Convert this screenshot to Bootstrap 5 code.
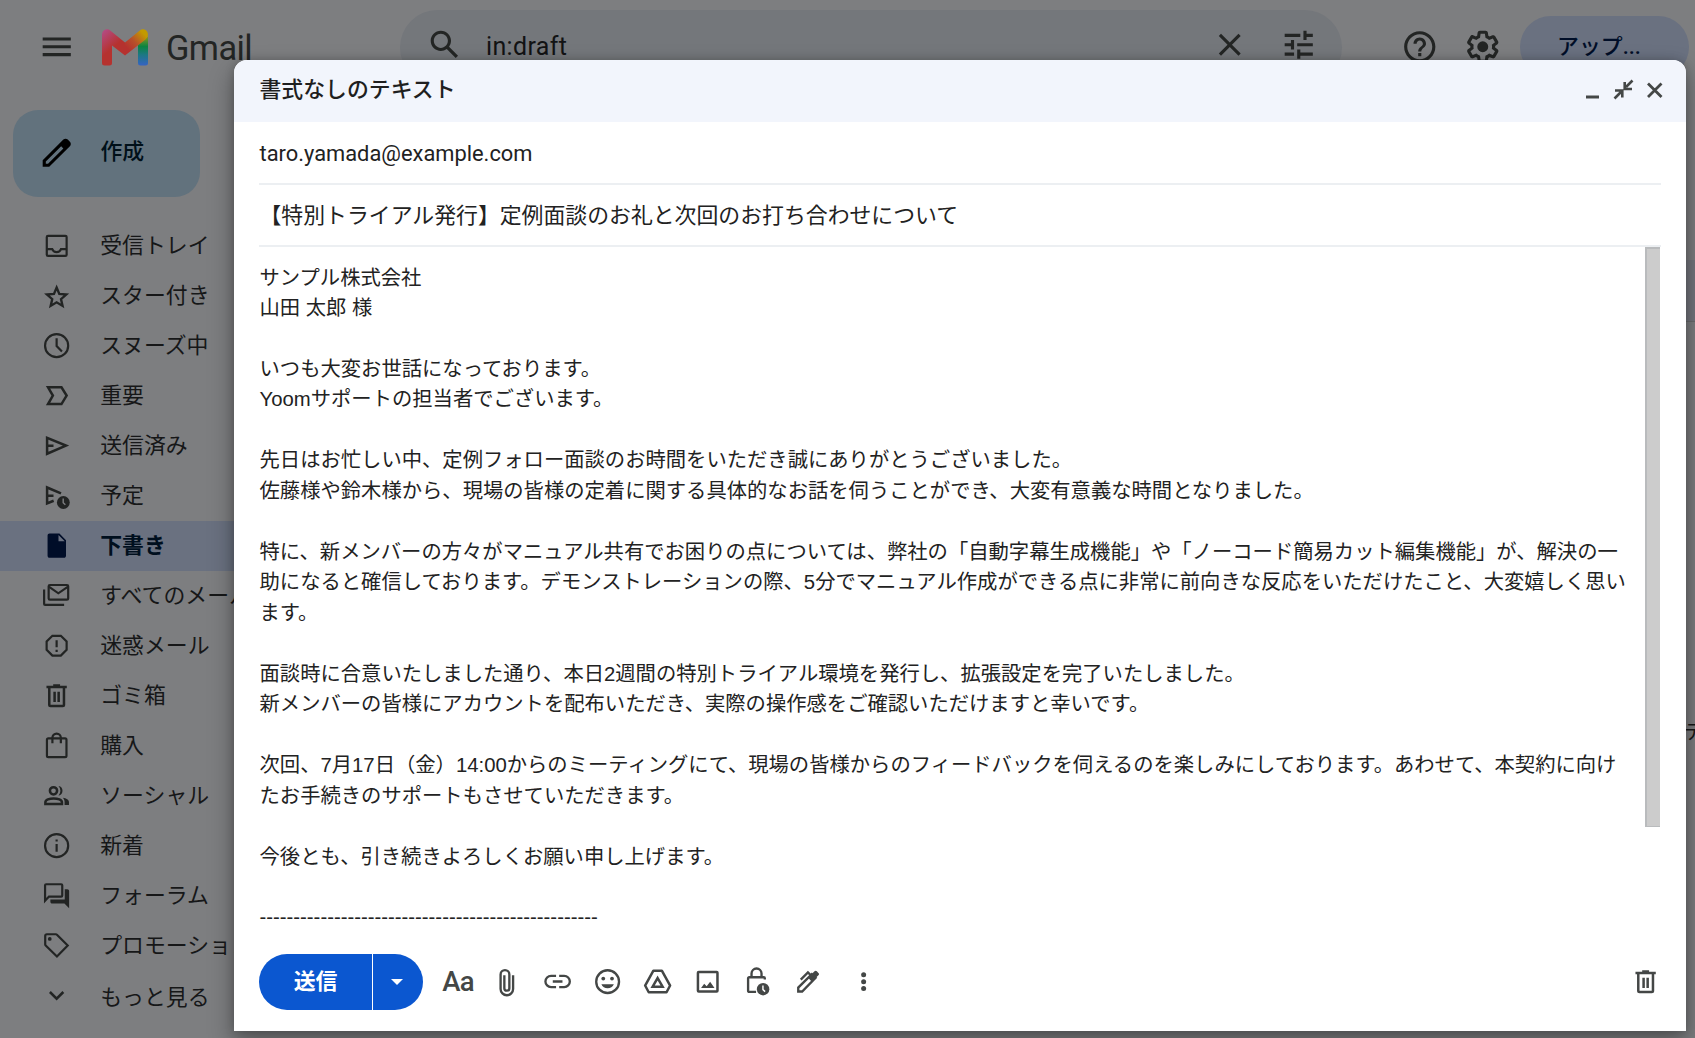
<!DOCTYPE html>
<html lang="ja">
  <head>
    <meta charset="UTF-8" />
    <meta name="viewport" content="width=device-width, initial-scale=1.0" />
    <title>Gmail</title>
    <link
      href="https://cdn.jsdelivr.net/npm/bootstrap@5.3.0/dist/css/bootstrap.min.css"
      rel="stylesheet"
    />
    <style>
      body {
        height: 1038px;
        background: #7d7e80;
        color: #161718;
        font-family: Roboto, "Noto Sans CJK JP", sans-serif;
        font-size: 21.875px;
        line-height: 1.5;
      }
      svg {
        display: block;
        flex: none;
        fill: currentColor;
      }
      .line-icon {
        fill: none;
        stroke: currentColor;
        stroke-width: 1.4;
      }
      .i20 {
        width: 31.25px;
        height: 31.25px;
      }
      .i24 {
        width: 37.5px;
        height: 37.5px;
      }
      .topbar {
        height: 94px;
        padding-left: 37.5px;
        color: #232524;
      }
      .logo-mark {
        width: 46px;
        height: 37px;
        margin-left: 27px;
      }
      .wordmark {
        width: 234px;
        margin-left: 18px;
        padding-top: 2px;
        font: 34.4px/1 Roboto, sans-serif;
        letter-spacing: -0.6px;
      }
      .search-pill {
        width: 942px;
        height: 75px;
        padding: 0 25px 4px 25.5px;
        border-radius: 38px;
        background: #74777b;
      }
      .search-text {
        margin-left: 23px;
        padding-top: 3px;
        font-size: 25px;
        letter-spacing: 0.35px;
        color: #121314;
      }
      .tune-icon {
        margin-left: 31px;
      }
      .help-icon {
        margin-left: 59px;
      }
      .gear-icon {
        margin-left: 25.5px;
      }
      .upgrade {
        width: 169px;
        height: 62px;
        margin-left: 18px;
        padding-right: 10px;
        border-radius: 31px;
        background: #6a7180;
        color: #000e28;
      }
      .side {
        width: 400px;
      }
      .compose-btn {
        width: 187px;
        height: 87px;
        margin: 16px 0 24px 13px;
        padding-left: 25px;
        gap: 25px;
        border-radius: 25px;
        background: #62727d;
        color: #001019;
      }
      .compose-btn svg {
        margin-top: -1px;
        color: #000;
      }
      .compose-btn span {
        margin-top: -2px;
      }
      .side-row {
        height: 50px;
        padding-left: 41px;
        gap: 28px;
        white-space: nowrap;
      }
      .side-row svg {
        color: #222423;
      }
      .side-row.current {
        background: #6a7180;
        color: #000f1e;
      }
      .side-row.current svg {
        color: #000d28;
      }
      .side-row.more-row {
        padding-top: 4px;
      }
      .peek {
        width: 12px;
        height: 944px;
        padding-top: 166px;
      }
      .peek-row {
        height: 62px;
        background: #74767d;
        border-bottom: 1px solid #6a6b6d;
      }
      .peek-text {
        margin-top: 395px;
        margin-left: 1px;
        font-size: 20.3px;
        white-space: nowrap;
      }
      .dialog-box {
        left: 234px;
        top: 60px;
        width: 1452px;
        height: 971px;
        border-radius: 13px 13px 0 0;
        background: #fff;
        color: #222;
        box-shadow: 0 12px 24px 2px rgba(0, 0, 0, 0.3), 0 0 10px rgba(0, 0, 0, 0.2);
      }
      .dialog-head {
        height: 62px;
        padding: 0 16px 1px 25.5px;
        background: #f2f5fc;
        border-radius: 13px 13px 0 0;
        color: #1f1f1f;
      }
      .dialog-head svg {
        margin-top: -2px;
        color: #444746;
      }
      .field-line {
        height: 62px;
        margin: 0 25px;
        padding: 2px 0 0 0.5px;
        border-bottom: 2px solid #eceff2;
        white-space: nowrap;
      }
      .mail-area {
        height: 708px;
        margin: 0 26px 0 25px;
      }
      .first-field {
        margin-top: 1px;
      }
      .mail-text {
        padding: 15.6px 0 0 0.5px;
        font-family: "Liberation Sans", "Noto Sans CJK JP", sans-serif;
        font-size: 20.325px;
        line-height: 30.46875px;
        white-space: pre;
      }
      .scroll-thumb {
        width: 15px;
        height: 580px;
        background: #ccc;
        box-shadow: inset 2px 2px 0 #b9bbbd, inset 0 -1px 0 #b9bbbd;
      }
      .tools {
        height: 56px;
        padding: 0 25px 0 25px;
        margin-top: -1px;
        color: #444746;
      }
      .send {
        height: 56px;
        margin-right: 10px;
        color: #fff;
      }
      .send-main,
      .send-more {
        height: 56px;
        background: #0b57d0;
      }
      .send-main {
        width: 113px;
        margin-right: 1px;
        border-radius: 28px 0 0 28px;
      }
      .send-more {
        width: 50px;
        padding-right: 3px;
        border-radius: 0 28px 28px 0;
      }
      .tool {
        width: 50px;
      }
      .tool-more {
        margin-left: 6px;
      }
      .letters {
        width: 50px;
        font: 500 27.5px/1 Roboto, sans-serif;
        letter-spacing: -0.8px;
      }
    </style>
  </head>
  <body class="overflow-hidden position-relative">
    <header class="topbar d-flex align-items-center">
      <svg class="i24" viewBox="0 0 24 24"><path d="M3 18h18v-2H3v2zm0-5h18v-2H3v2zm0-7v2h18V6H3z" /></svg>
      <svg class="logo-mark" viewBox="0 0 46 37">
        <defs>
          <linearGradient id="gl" gradientUnits="userSpaceOnUse" x1="2" y1="2" x2="14" y2="16">
            <stop offset="0" stop-color="#b44a80" />
            <stop offset="1" stop-color="#b5322f" />
          </linearGradient>
          <linearGradient id="gr" gradientUnits="userSpaceOnUse" x1="0" y1="4" x2="0" y2="36">
            <stop offset="0" stop-color="#c29a00" />
            <stop offset="0.22" stop-color="#5f902b" />
            <stop offset="0.42" stop-color="#0a8440" />
            <stop offset="0.68" stop-color="#1d7884" />
            <stop offset="1" stop-color="#3464c0" />
          </linearGradient>
          <linearGradient id="gv" gradientUnits="userSpaceOnUse" x1="26" y1="20" x2="42" y2="5">
            <stop offset="0" stop-color="#b5322f" />
            <stop offset="0.45" stop-color="#b8502a" />
            <stop offset="1" stop-color="#c29a00" />
          </linearGradient>
        </defs>
        <path fill="url(#gr)" d="M36 8H46V34Q46 36.500 43.500 36.500H38.500Q36 36.500 36 34z" />
        <path fill="url(#gv)" d="M23 13.500L37.500 1.700C41-1.300 46 1 46 6Q46 8.500 43.500 10.400L23 26.500z" />
        <path fill="url(#gl)" d="M0 6C0 1 5-1.300 8.500 1.700L23 13.500V26.500L10 16.500V34Q10 36.500 7.500 36.500H2.500Q0 36.500 0 34z" />
      </svg>
      <div class="wordmark">Gmail</div>
      <div class="search-pill d-flex align-items-center">
        <svg class="i24" viewBox="0 0 24 24"><path d="M20.490 19l-5.730-5.730C15.530 12.200 16 10.910 16 9.500 16 5.910 13.090 3 9.500 3S3 5.910 3 9.500 5.910 16 9.500 16c1.410 0 2.700-.470 3.770-1.240L19 20.490 20.490 19zM5 9.500C5 7.010 7.010 5 9.500 5S14 7.010 14 9.500 11.990 14 9.500 14 5 11.990 5 9.500z" /></svg>
        <span class="search-text flex-grow-1">in:draft</span>
        <svg class="i24" viewBox="0 0 24 24"><path d="M19 6.410L17.590 5 12 10.590 6.410 5 5 6.410 10.590 12 5 17.590 6.410 19 12 13.410 17.590 19 19 17.590 13.410 12z" /></svg>
        <svg class="i24 tune-icon" viewBox="0 0 24 24"><path d="M3 17v2h6v-2H3zM3 5v2h10V5H3zm10 16v-2h8v-2h-8v-2h-2v6h2zM7 9v2H3v2h4v2h2V9H7zm14 4v-2H11v2h10zm-6-4h2V7h4V5h-4V3h-2v6z" /></svg>
      </div>
      <svg class="i24 help-icon" viewBox="0 0 24 24"><path d="M11 18h2v-2h-2v2zm1-16C6.480 2 2 6.480 2 12s4.480 10 10 10 10-4.480 10-10S17.520 2 12 2zm0 18c-4.410 0-8-3.590-8-8s3.590-8 8-8 8 3.590 8 8-3.590 8-8 8zm0-14c-2.210 0-4 1.790-4 4h2c0-1.100.900-2 2-2s2 .900 2 2c0 2-3 1.750-3 5h2c0-2.250 3-2.500 3-5 0-2.210-1.790-4-4-4z" /></svg>
      <svg class="i24 gear-icon" viewBox="0 0 24 24"><path d="M13.850 22.250h-3.700c-.740 0-1.360-.540-1.450-1.270l-.270-1.890c-.270-.140-.530-.290-.790-.460l-1.800.720c-.700.260-1.470-.030-1.810-.650L2.200 15.530c-.350-.660-.200-1.440.360-1.880l1.530-1.190c-.010-.150-.020-.300-.020-.460 0-.150.010-.310.020-.460l-1.520-1.190c-.590-.450-.740-1.260-.370-1.880l1.850-3.190c.340-.620 1.110-.900 1.790-.630l1.810.730c.260-.170.520-.320.780-.460l.270-1.910c.090-.700.710-1.250 1.440-1.250h3.700c.740 0 1.360.540 1.450 1.270l.270 1.890c.270.140.530.290.790.460l1.800-.720c.710-.260 1.480.030 1.820.650l1.840 3.180c.360.660.200 1.440-.360 1.880l-1.520 1.190c.010.150.020.300.020.460s-.010.310-.020.460l1.520 1.190c.560.450.720 1.230.370 1.860l-1.860 3.220c-.340.620-1.110.900-1.800.630l-1.800-.720c-.260.170-.520.320-.780.460l-.270 1.910c-.100.680-.720 1.220-1.460 1.220zm-3.230-2h2.760l.370-2.550.530-.220c.440-.180.880-.440 1.340-.780l.450-.340 2.380.960 1.380-2.400-2.030-1.580.070-.560c.030-.260.060-.510.060-.780s-.030-.530-.060-.780l-.070-.560 2.030-1.580-1.390-2.400-2.390.960-.450-.350c-.420-.320-.870-.580-1.330-.770l-.520-.220-.370-2.550h-2.760l-.370 2.550-.530.210c-.440.190-.880.440-1.340.790l-.450.330-2.380-.950-1.390 2.390 2.030 1.580-.070.560a7 7 0 0 0-.060.790c0 .260.020.530.060.780l.070.560-2.030 1.580 1.380 2.400 2.390-.960.450.350c.430.330.860.580 1.330.770l.530.220z" /><circle cx="12" cy="12" r="3.500" /></svg>
      <div class="upgrade d-flex align-items-center justify-content-center fw-medium">アップ...</div>
    </header>

    <div class="d-flex justify-content-between">
      <nav class="side">
        <div class="compose-btn d-flex align-items-center">
          <svg class="i24" viewBox="0 0 24 24"><path d="M20.410 4.940l-1.350-1.350c-.780-.780-2.050-.780-2.830 0L3 16.820V21h4.180L20.410 7.770c.790-.780.790-2.050 0-2.830zm-14 14.120L5 19v-1.360l9.820-9.820 1.410 1.410-9.820 9.830z" /></svg>
          <span class="fw-medium">作成</span>
        </div>
        <div id="folders"></div>
      </nav>
      <div class="peek overflow-hidden">
        <div class="peek-row"></div>
        <div class="peek-text">デ</div>
      </div>
    </div>

    <section class="dialog-box position-absolute d-flex flex-column">
      <div class="dialog-head d-flex align-items-center">
        <span class="fw-medium flex-grow-1">書式なしのテキスト</span>
        <svg width="31" height="31" viewBox="0 0 31 31"><path d="M9 21.500h13v3H9z" /></svg>
        <svg width="31" height="31" viewBox="0 0 31 31"><path d="M24.500 6.500l-6.500 6.500M16.700 8v7H24M6.500 24.500l6.500-6.500M7 16.500H14.300V23.500" fill="none" stroke="currentColor" stroke-width="2.600" /></svg>
        <svg width="31" height="31" viewBox="0 0 31 31"><path d="M9 9.500l13.500 13.500M22.500 9.500L9 23" stroke="currentColor" stroke-width="2.800" /></svg>
      </div>
      <div class="field-line first-field d-flex align-items-center"><span>taro.yamada@example.com</span></div>
      <div class="field-line d-flex align-items-center"><span>【特別トライアル発行】定例面談のお礼と次回のお打ち合わせについて</span></div>
      <div class="mail-area d-flex justify-content-between overflow-hidden">
        <div class="mail-text">サンプル株式会社
山田 太郎 様

いつも大変お世話になっております。
Yoomサポートの担当者でございます。

先日はお忙しい中、定例フォロー面談のお時間をいただき誠にありがとうございました。
佐藤様や鈴木様から、現場の皆様の定着に関する具体的なお話を伺うことができ、大変有意義な時間となりました。

特に、新メンバーの方々がマニュアル共有でお困りの点については、弊社の「自動字幕生成機能」や「ノーコード簡易カット編集機能」が、解決の一
助になると確信しております。デモンストレーションの際、5分でマニュアル作成ができる点に非常に前向きな反応をいただけたこと、大変嬉しく思い
ます。

面談時に合意いたしました通り、本日2週間の特別トライアル環境を発行し、拡張設定を完了いたしました。
新メンバーの皆様にアカウントを配布いただき、実際の操作感をご確認いただけますと幸いです。

次回、7月17日（金）14:00からのミーティングにて、現場の皆様からのフィードバックを伺えるのを楽しみにしております。あわせて、本契約に向け
たお手続きのサポートもさせていただきます。

今後とも、引き続きよろしくお願い申し上げます。

--------------------------------------------------</div>
        <div class="scroll-thumb"></div>
      </div>
      <div class="tools d-flex align-items-center" id="tools">
        <div class="send d-flex">
          <div class="send-main d-flex align-items-center justify-content-center fw-bold">送信</div>
          <div class="send-more d-flex align-items-center justify-content-center">
            <svg width="12" height="6" viewBox="0 0 12 6"><path d="M0 0h12L6 6z" /></svg>
          </div>
        </div>
        <div class="letters text-center">Aa</div>
      </div>
    </section>

    <script src="https://cdn.jsdelivr.net/npm/bootstrap@5.3.0/dist/js/bootstrap.bundle.min.js"></script>
    <script>
      // all shapes are drawn on a 20x20 grid, stroked unless they set their own fill
      const solid = 'fill="currentColor" stroke="none"';
      const trash = `<path d="M5.300 5.200v10.700c0 .500.300.800.800.800h7.800c.500 0 .800-.300.800-.800V5.200M3.500 4.400h13M7.800 3.500h4.400M8.700 7.500v6.500M11.300 7.500v6.500" stroke-width="1.600"/>`;
      const clip = `<path d="M14 5.300v8.800a4 4 0 0 1-8 0V4.800a2.800 2.800 0 0 1 5.600 0v8.800a1.600 1.600 0 0 1-3.200 0V5.300" transform="translate(-.5 .6)" stroke-width="1.500"/>`;

      const folders = [
        ["受信トレイ", `<rect x="3.700" y="3.700" width="12.700" height="12.900" rx=".800"/><path d="M3.700 12.200h3.500c.400 1.100 1.500 1.900 2.800 1.900s2.400-.800 2.800-1.900h3.500"/>`],
        ["スター付き", `<path d="M10 4.200l1.700 4.100 4.500.400-3.400 2.900 1 4.400L10 13.700 6.200 16l1-4.400-3.400-2.900 4.500-.400z" transform="translate(0 .6)" stroke-width="1.500"/>`],
        ["スヌーズ中", `<circle cx="10" cy="10" r="7.400"/><path d="M10 5.200V10.300l3.400 3.400"/>`],
        ["重要", `<path d="M4.500 4.700h8.600L16.400 10l-3.300 5.400H4.500L7.600 10z" stroke-width="1.600"/>`],
        ["送信済み", `<path d="M3.900 5v10.200L16 10zM3.900 10H8" stroke-width="1.600"/>`],
        ["予定", `<path d="M12.800 8.600L3.900 4.800v10.200l4.200-1.700M3.900 10H8" stroke-width="1.600"/><circle cx="14.300" cy="14.400" r="4.100" ${solid}/><path d="M14.200 11.900v2.600l1.400 1.300" stroke="#7d7e80" stroke-width=".900"/>`],
        ["下書き", `<path d="M5.500 2.200h6.300L16 6.500v9.900c0 .800-.500 1.300-1.300 1.300H5.500c-.800 0-1.300-.500-1.300-1.300V3.500c0-.800.500-1.300 1.300-1.300zM11.200 3.200v4h4z" fill-rule="evenodd" ${solid}/>`],
        ["すべてのメール", `<rect x="4.900" y="3.200" width="12.500" height="9.400" rx=".800"/><path d="M5 4.200l6.100 4.300 6.200-4.300M2 6v9.300c0 .400.200.600.600.600H14.800"/>`],
        ["迷惑メール", `<path d="M7.300 3.700h5.400l3.700 3.700v5.300l-3.700 3.700H7.300l-3.700-3.700V7.400z"/><path d="M10 6.500v4.600M10 12.700v1.300"/>`],
        ["ゴミ箱", trash],
        ["購入", `<rect x="3.800" y="5.300" width="12.500" height="12" rx=".900"/><path d="M7.300 8.400V5a2.700 2.700 0 0 1 5.400 0v3.400"/>`],
        ["ソーシャル", `<circle cx="8" cy="6.900" r="2.300" stroke-width="1.600"/><path d="M2.800 15.300v-1c0-1.600 2.600-2.500 5.300-2.500s5.300.900 5.300 2.500v1z" stroke-width="1.600"/><path d="M11.200 3.900a3.100 3.100 0 0 1 0 6.100 4.400 4.400 0 0 0 0-6.100zM14 11.400c2.100.400 3.900 1.200 3.900 2.800V16h-2.800v-1.900c0-1.100-.400-2-1.100-2.700z" ${solid}/>`],
        ["新着", `<circle cx="10" cy="10" r="7.400"/><path d="M10 9v4.900M10 6.100v1.300"/>`],
        ["フォーラム", `<path d="M2.600 13.300V3.400c0-.400.300-.700.700-.700h9.600c.400 0 .700.300.700.700v6.500c0 .400-.300.700-.700.700H5.100z"/><path d="M15.200 5.900h1.600c.700 0 1.200.500 1.200 1.200V18l-3-2.900H7.200c-.700 0-1.200-.500-1.200-1.200v-1.500h9.200z" ${solid}/>`],
        ["プロモーション", `<path d="M2.700 3.700c0-.600.400-1 1-1h5.800c.300 0 .500.100.700.300l6.900 6.900-6.900 7.100-7.200-7.100a1 1 0 0 1-.3-.7z"/><circle cx="5.600" cy="5.700" r="1.200" ${solid}/>`],
        ["もっと見る", `<path d="M5.700 7l4.300 4.300L14.300 7" transform="translate(0 -.6)" stroke-width="1.600"/>`],
      ];

      const toolIcons = [
        clip,
        `<path d="M9 6.300H5.800a3.600 3.600 0 0 0 0 7.200H9M11 6.300h3.200a3.600 3.600 0 0 1 0 7.200H11M6.900 9.900h6.200" stroke-width="1.500"/>`,
        `<circle cx="10" cy="10" r="7.300" stroke-width="1.500"/><g ${solid}><circle cx="7.200" cy="8" r="1.200"/><circle cx="12.800" cy="8" r="1.200"/><path d="M6 11.700h8c-.700 1.600-2.200 2.600-4 2.600s-3.300-1-4-2.600z"/></g>`,
        `<path d="M7.300 3h5.400l5.300 9.500-2.300 4.300H4.300L2 12.500z" stroke-width="1.600" stroke-linejoin="round"/><path d="M10 7.700l3.200 5.500H6.800z" stroke-width="1.600"/>`,
        `<rect x="3.800" y="3.800" width="12.500" height="12.500" rx=".500" stroke-width="1.600"/><path d="M5.800 14l2-2.700 1.600 1.700 2.200-3 2.800 4z" ${solid}/>`,
        `<path d="M8.700 17H4.300c-.400 0-.700-.300-.700-.700V8.300c0-.400.300-.700.700-.700h9.300c.400 0 .700.300.700.700v.8M5.800 7.500V5.200a3.200 3.200 0 0 1 6.400 0v2.300" transform="translate(.3 -.4)" stroke-width="1.500"/><circle cx="13.500" cy="14.800" r="4" ${solid}/><path d="M13.400 12.500v2.600l1.400 1.300" stroke="#fff" stroke-width=".900"/>`,
        `<path d="M4 16.300v-2.500l8.700-8.600 2.400 2.400-8.600 8.700zM5.600 8.700l4.600-4.600 2 2" stroke-width="1.500"/><path d="M10.300 7.500l4.100-4.100c.500-.500 1-.500 1.500 0l1 1c.500.500.500 1 0 1.500l-4.200 4.100z" ${solid}/>`,
      ];

      const icon = (shapes) =>
        `<svg class="i20 line-icon" viewBox="0 0 20 20">${shapes}</svg>`;

      document.getElementById("folders").innerHTML = folders
        .map(([name, shapes]) => {
          let extra = "";
          if (name === "下書き") extra = "current fw-bold";
          if (name === "もっと見る") extra = "more-row";
          return `<div class="side-row d-flex align-items-center ${extra}">${icon(shapes)}<span>${name}</span></div>`;
        })
        .join("");

      const tool = (shapes) =>
        `<div class="tool d-flex justify-content-center">${icon(shapes)}</div>`;
      const dots = `<g ${solid}><circle cx="10" cy="5.600" r="1.600"/><circle cx="10" cy="10" r="1.600"/><circle cx="10" cy="14.400" r="1.600"/></g>`;

      document.getElementById("tools").insertAdjacentHTML(
        "beforeend",
        toolIcons.map(tool).join("") +
          `<div class="tool-more">${tool(dots)}</div>` +
          `<div class="ms-auto">${icon(trash)}</div>`
      );
    </script>
  </body>
</html>
